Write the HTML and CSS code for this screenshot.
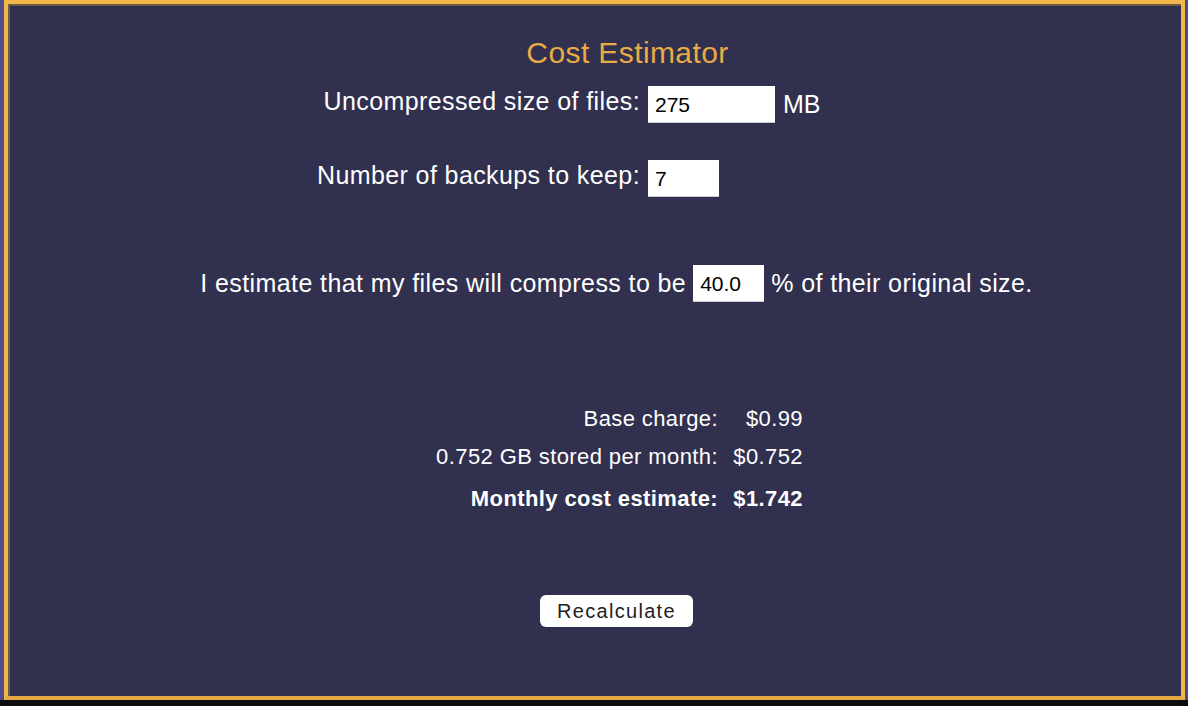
FILE: index.html
```html
<!DOCTYPE html>
<html lang="en">
<head>
  <meta charset="UTF-8" />
  <meta name="viewport" content="width=device-width, initial-scale=1.0" />
  <title>Cost Estimator</title>
  <link rel="stylesheet" href="styles.css">
</head>
<body>
  <div class="frame">
    <div class="panel">
      <h1 class="title">Cost Estimator</h1>

      <div class="inputs">
        <label class="lbl" for="size-mb">Uncompressed size of files:</label>
        <div class="field"><input id="size-mb" class="num wide" value="275"><span class="unit">MB</span></div>

        <label class="lbl" for="backups">Number of backups to keep:</label>
        <div class="field"><input id="backups" class="num narrow" value="7"></div>
      </div>

      <div class="ratio">
        <span>I estimate that my files will compress to be</span>
        <input id="ratio" class="num narrow" value="40.0">
        <span>% of their original size.</span>
      </div>

      <div class="costs">
        <span class="c-lbl">Base charge:</span><span class="c-val" id="base">$0.99</span>
        <span class="c-lbl storage" id="gb-lbl">0.752 GB stored per month:</span><span class="c-val storage" id="storage">$0.752</span>
        <span class="c-lbl total">Monthly cost estimate:</span><span class="c-val total" id="total">$1.742</span>
      </div>

      <div class="actions">
        <button class="btn" onclick="recalc()">Recalculate</button>
      </div>
    </div>
  </div>
  <div class="dock"></div>

  <script>
    function recalc() {
      const mb = parseFloat(document.getElementById("size-mb").value) || 0;
      const keep = parseFloat(document.getElementById("backups").value) || 0;
      const pct = parseFloat(document.getElementById("ratio").value) || 0;
      const gb = Math.round(mb * keep * pct / 100) / 1000;
      const base = 0.99;
      document.getElementById("gb-lbl").textContent = gb + " GB stored per month:";
      document.getElementById("storage").textContent = "$" + gb;
      document.getElementById("total").textContent = "$" + Math.round((base + gb) * 1000) / 1000;
    }
  </script>
</body>
</html>
```

FILE: styles.css
```css
body {
  margin: 0;
  background: #4e4d86;
  font-family: "Liberation Sans", Arial, sans-serif;
  color: #fff;
}
.frame {
  padding: 0 3px 0 4px;
}
.panel {
  box-sizing: border-box;
  height: 700px;
  padding-top: 32px;
  background: #31304f;
  border: 4px solid #f1b74b;
  border-bottom-color: #e6a941;
  box-shadow: inset 2px 2px 0 #6a5c3d, 0 1px 0 #9c8450;
}
.dock {
  height: 6px;
  background: #0c0c0c;
}
.title {
  margin: 0 0 16px;
  padding-left: 66px;
  text-align: center;
  font-size: 30px;
  line-height: 34px;
  letter-spacing: 0.4px;
  font-weight: normal;
  color: #e8ab45;
}
.inputs {
  display: grid;
  grid-template-columns: 632px 1fr;
  column-gap: 8px;
  row-gap: 37px;
  align-items: start;
}
.lbl {
  text-align: right;
  font-size: 25px;
  line-height: 30px;
  letter-spacing: 0.4px;
}
.field {
  display: flex;
  align-items: center;
  gap: 8px;
}
.unit {
  font-size: 25px;
}
.num {
  box-sizing: border-box;
  height: 37px;
  padding: 2px 7px 0;
  border: none;
  border-bottom: 1px solid #c9c9d0;
  background: #fff;
  color: #000;
  font-family: "Liberation Sans", Arial, sans-serif;
  font-size: 21px;
  letter-spacing: 0;
}
.wide {
  width: 127px;
}
.narrow {
  width: 71px;
}
.ratio {
  display: flex;
  justify-content: center;
  align-items: center;
  gap: 7px;
  margin-top: 68px;
  padding-left: 44px;
  font-size: 25px;
  letter-spacing: 0.4px;
}
.costs {
  display: grid;
  grid-template-columns: 710px 85px;
  margin-top: 99px;
  font-size: 22px;
  line-height: 36px;
  letter-spacing: 0.4px;
}
.c-lbl,
.c-val {
  text-align: right;
}
.storage {
  margin-top: 2px;
}
.total {
  margin-top: 6px;
  font-weight: bold;
}
.actions {
  margin-top: 78px;
  padding-left: 44px;
  text-align: center;
}
.btn {
  height: 32px;
  padding: 0 17px;
  background: #fff;
  color: #222;
  border: none;
  border-radius: 6px;
  font-family: "Liberation Sans", Arial, sans-serif;
  font-size: 20px;
  letter-spacing: 1.3px;
  cursor: pointer;
}
```
